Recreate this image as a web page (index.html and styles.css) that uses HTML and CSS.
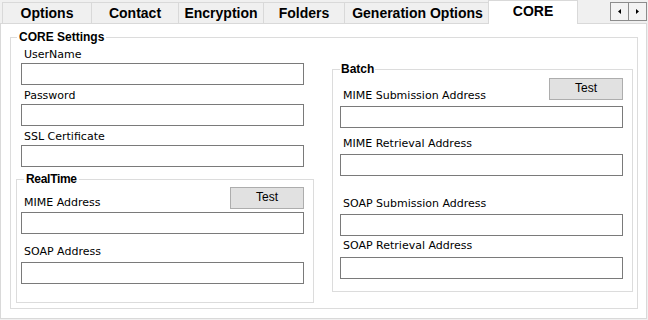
FILE: index.html
```html
<!doctype html>
<html lang="en">
    <head>
        <meta charset="UTF-8" />
        <title>CORE Settings</title>
        <link rel="stylesheet" href="styles.css">
    </head>
    <body>
        <div class="tabs">
            <div class="tab tab-options">Options</div>
            <div class="tab tab-contact">Contact</div>
            <div class="tab tab-encryption">Encryption</div>
            <div class="tab tab-folders">Folders</div>
            <div class="tab tab-generation">Generation Options</div>
            <div class="tab tab-core active">CORE</div>
            <div class="scroller">
                <span class="scroll-btn">
                    <svg width="3" height="5" viewBox="0 0 3 5"><polygon points="3,0 3,5 0,2.5" fill="#000"/></svg>
                </span>
                <span class="scroll-btn">
                    <svg width="3" height="5" viewBox="0 0 3 5"><polygon points="0,0 0,5 3,2.5" fill="#000"/></svg>
                </span>
            </div>
        </div>

        <div class="panel">
            <fieldset class="group core">
                <legend>CORE Settings</legend>
                <div class="columns">
                    <!-- Left column -->
                    <div class="column">
                        <div class="field indent">
                            <label for="username">UserName</label>
                            <input type="text" id="username" />
                        </div>
                        <div class="field indent">
                            <label for="password">Password</label>
                            <input type="text" id="password" />
                        </div>
                        <div class="field indent">
                            <label for="ssl">SSL Certificate</label>
                            <input type="text" id="ssl" />
                        </div>

                        <fieldset class="group realtime">
                            <legend>RealTime</legend>
                            <div class="field">
                                <div class="field-head">
                                    <label for="rt-mime">MIME Address</label>
                                    <button class="button" type="button">Test</button>
                                </div>
                                <input type="text" id="rt-mime" />
                            </div>
                            <div class="field soap-address">
                                <label for="rt-soap">SOAP Address</label>
                                <input type="text" id="rt-soap" />
                            </div>
                        </fieldset>
                    </div>

                    <!-- Right column -->
                    <div class="column">
                        <fieldset class="group batch">
                            <legend>Batch</legend>
                            <div class="field">
                                <div class="field-head">
                                    <label for="b-mime-sub">MIME Submission Address</label>
                                    <button class="button" type="button">Test</button>
                                </div>
                                <input type="text" id="b-mime-sub" />
                            </div>
                            <div class="field mime-retrieval">
                                <label for="b-mime-ret">MIME Retrieval Address</label>
                                <input type="text" id="b-mime-ret" />
                            </div>
                            <div class="field soap-submission">
                                <label for="b-soap-sub">SOAP Submission Address</label>
                                <input type="text" id="b-soap-sub" />
                            </div>
                            <div class="field soap-retrieval">
                                <label for="b-soap-ret">SOAP Retrieval Address</label>
                                <input type="text" id="b-soap-ret" />
                            </div>
                        </fieldset>
                    </div>
                </div>
            </fieldset>
        </div>
    </body>
</html>
```

FILE: styles.css
```css
body {
    margin: 0;
    background-color: #f0f0f0;
    font-family: "DejaVu Sans", Verdana, sans-serif;
    font-size: 11px;
    color: #000;
}

/* Tab strip */
.tabs {
    display: flex;
    align-items: flex-end;
    height: 23px;
    padding-left: 2px;
}
.tab {
    box-sizing: border-box;
    height: 21px;
    margin-right: -1px;
    border: 1px solid #d9d9d9;
    border-bottom: none;
    background-color: #f0f0f0;
    font-family: "Liberation Sans", Arial, sans-serif;
    font-weight: bold;
    font-size: 14px;
    line-height: 21px;
    text-align: center;
}
.tab-options { width: 90px; }
.tab-contact { width: 88px; }
.tab-encryption { width: 86px; }
.tab-folders { width: 82px; }
.tab-generation { width: 147px; }
.tab.active {
    position: relative;
    z-index: 1;
    width: 90px;
    height: 24px;
    margin-left: -2px;
    margin-bottom: -1px;
    background-color: #fff;
    line-height: 20px;
}
.scroller {
    display: flex;
    align-self: flex-start;
    margin-top: 2px;
    margin-left: auto;
    margin-right: 1px;
}
.scroll-btn {
    display: flex;
    align-items: center;
    justify-content: center;
    box-sizing: border-box;
    width: 19px;
    height: 19px;
    border: 1px solid #8c8c8c;
    background-color: #f3f3f3;
}
.scroll-btn + .scroll-btn {
    margin-left: -1px;
}

/* Tab page */
.panel {
    box-sizing: border-box;
    width: 647px;
    height: 296px;
    padding: 6px 8px 9px 9px;
    border: 1px solid #d9d9d9;
    background-color: #fff;
}

/* Group boxes */
.group {
    margin: 0;
    min-width: 0;
    border: 1px solid #dcdcdc;
}
.group legend {
    padding: 0 2px;
    font-family: "Liberation Sans", Arial, sans-serif;
    font-weight: bold;
    font-size: 12px;
    line-height: 14px;
}
.core {
    width: 628px;
    box-sizing: border-box;
    padding: 4px 4px 5px 5px;
}
.core > legend {
    margin-left: 1px;
}
.columns {
    display: grid;
    grid-template-columns: 298px 301px;
    column-gap: 18px;
    align-items: start;
}
.realtime {
    box-sizing: border-box;
    width: 298px;
    margin-top: 5px;
    padding: 0 9px 18px 4px;
}
.realtime legend {
    margin-left: 3px;
    letter-spacing: -0.3px;
}
.batch {
    box-sizing: border-box;
    width: 301px;
    margin-top: 14px;
    padding: 0 9px 12px 7px;
}
.batch legend {
    padding: 0 1px;
}

/* Fields */
.field label {
    display: block;
    padding-left: 3px;
    margin-bottom: 2px;
    line-height: 13px;
}
.field input {
    display: block;
    box-sizing: border-box;
    width: 283px;
    height: 22px;
    margin: 0;
    padding: 0 3px;
    border: 1px solid #7a7a7a;
    background: #fff;
    font: inherit;
}
.field.indent {
    margin-left: 5px;
}
.field + .field {
    margin-top: 4px;
}
.batch .field label {
    margin-bottom: 4px;
}
.field-head {
    display: flex;
    justify-content: space-between;
    align-items: flex-start;
    margin-top: 1px;
}
.field .field-head label {
    margin-top: 9px;
    margin-bottom: 0;
}
.field-head + input {
    margin-top: 3px;
}
.realtime .soap-address {
    margin-top: 11px;
}
.realtime .soap-address label {
    margin-bottom: 4px;
}
.batch .field-head {
    margin-top: 2px;
}
.batch .field .field-head label {
    margin-top: 11px;
}
.batch .field .field-head + input {
    margin-top: 4px;
}
.batch .mime-retrieval {
    margin-top: 9px;
}
.batch .soap-submission {
    margin-top: 21px;
}
.batch .soap-retrieval {
    margin-top: 3px;
}
.batch .soap-retrieval label {
    margin-bottom: 5px;
}

.button {
    box-sizing: border-box;
    width: 74px;
    height: 22px;
    padding: 0 0 2px;
    border: 1px solid #adadad;
    background-color: #e1e1e1;
    font-family: "Liberation Sans", Arial, sans-serif;
    font-size: 12px;
    color: #000;
}
```
